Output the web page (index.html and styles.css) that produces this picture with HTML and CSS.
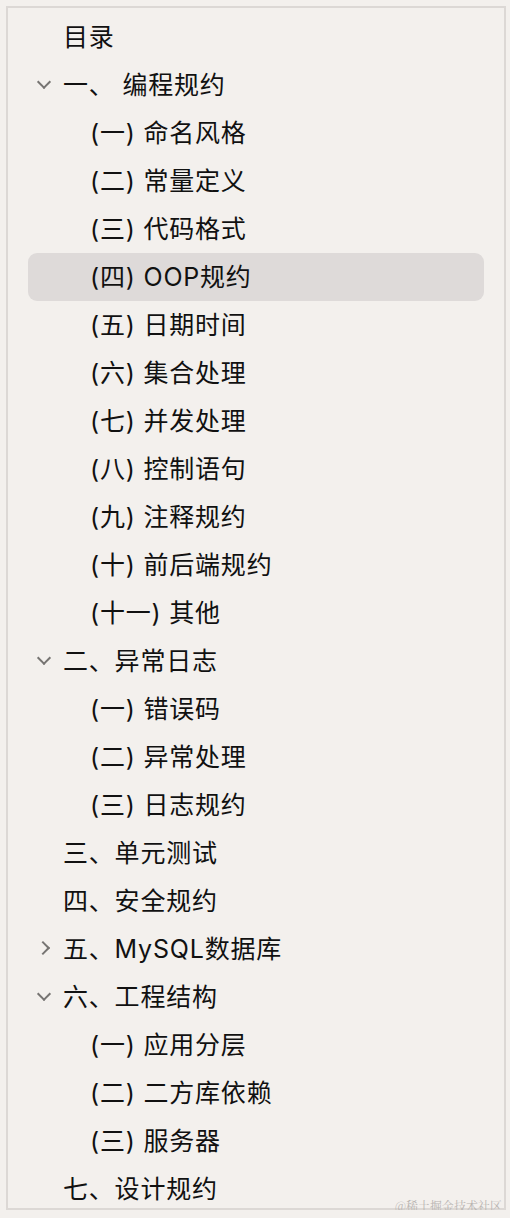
FILE: index.html
```html
<!DOCTYPE html>
<html lang="zh">
<head>
    <meta charset="UTF-8">
    <meta name="viewport" content="width=device-width, initial-scale=1.0">
    <title>目录</title>
    <link rel="stylesheet" href="styles.css">
</head>
<body>

<div class="panel">
    <ul class="toc">
        <li class="row"><span class="arrow"></span><span class="label">目录</span></li>
        <li class="row"><span class="arrow down"></span><span class="label">一、 编程规约</span></li>
        <li class="row sub"><span class="label">(一) 命名风格</span></li>
        <li class="row sub"><span class="label">(二) 常量定义</span></li>
        <li class="row sub"><span class="label">(三) 代码格式</span></li>
        <li class="row sub active"><span class="label">(四) OOP规约</span></li>
        <li class="row sub"><span class="label">(五) 日期时间</span></li>
        <li class="row sub"><span class="label">(六) 集合处理</span></li>
        <li class="row sub"><span class="label">(七) 并发处理</span></li>
        <li class="row sub"><span class="label">(八) 控制语句</span></li>
        <li class="row sub"><span class="label">(九) 注释规约</span></li>
        <li class="row sub"><span class="label">(十) 前后端规约</span></li>
        <li class="row sub"><span class="label">(十一) 其他</span></li>
        <li class="row"><span class="arrow down"></span><span class="label">二、异常日志</span></li>
        <li class="row sub"><span class="label">(一) 错误码</span></li>
        <li class="row sub"><span class="label">(二) 异常处理</span></li>
        <li class="row sub"><span class="label">(三) 日志规约</span></li>
        <li class="row"><span class="arrow"></span><span class="label">三、单元测试</span></li>
        <li class="row"><span class="arrow"></span><span class="label">四、安全规约</span></li>
        <li class="row"><span class="arrow right"></span><span class="label">五、MySQL数据库</span></li>
        <li class="row"><span class="arrow down"></span><span class="label">六、工程结构</span></li>
        <li class="row sub"><span class="label">(一) 应用分层</span></li>
        <li class="row sub"><span class="label">(二) 二方库依赖</span></li>
        <li class="row sub"><span class="label">(三) 服务器</span></li>
        <li class="row"><span class="arrow"></span><span class="label">七、设计规约</span></li>
    </ul>
    <div class="watermark">@稀土掘金技术社区</div>
</div>

</body>
</html>
```

FILE: styles.css
```css
body {
    margin: 0;
    padding: 6px 4px 0 6px;
    background-color: #f3f0ed;
    font-family: Inter, "Noto Sans CJK SC", sans-serif;
    color: #111;
}

.panel {
    position: relative;
    border: 2px solid #dcd8d5;
    height: 1204px;
    box-sizing: border-box;
    padding-top: 5px;
}

.toc {
    list-style: none;
    margin: 0;
    padding: 0;
}

.row {
    display: flex;
    align-items: center;
    box-sizing: border-box;
    height: 48px;
    margin: 0 20px;
    padding: 0 0 5px 8px;
    border-radius: 9px;
    font-size: 25px;
}

.row.sub {
    padding-left: 62px;
}

.row.active {
    background-color: #dedad9;
}

.arrow {
    width: 24px;
    height: 24px;
    margin-right: 3px;
    position: relative;
}

/* chevron drawn with two borders */
.arrow.down::before,
.arrow.right::before {
    content: "";
    position: absolute;
    width: 8px;
    height: 8px;
    border-right: 2.6px solid #767472;
    border-bottom: 2.6px solid #767472;
}

.arrow.down::before {
    left: 3px;
    top: 6px;
    transform: rotate(45deg);
}

.arrow.right::before {
    left: 2px;
    top: 8px;
    transform: rotate(-45deg);
}

.label {
    letter-spacing: 0.8px;
}

.watermark {
    position: absolute;
    right: 2px;
    bottom: -6px;
    font-family: "Noto Serif CJK SC", "Liberation Serif", serif;
    font-size: 12px;
    color: #b9b5b2;
}
```
